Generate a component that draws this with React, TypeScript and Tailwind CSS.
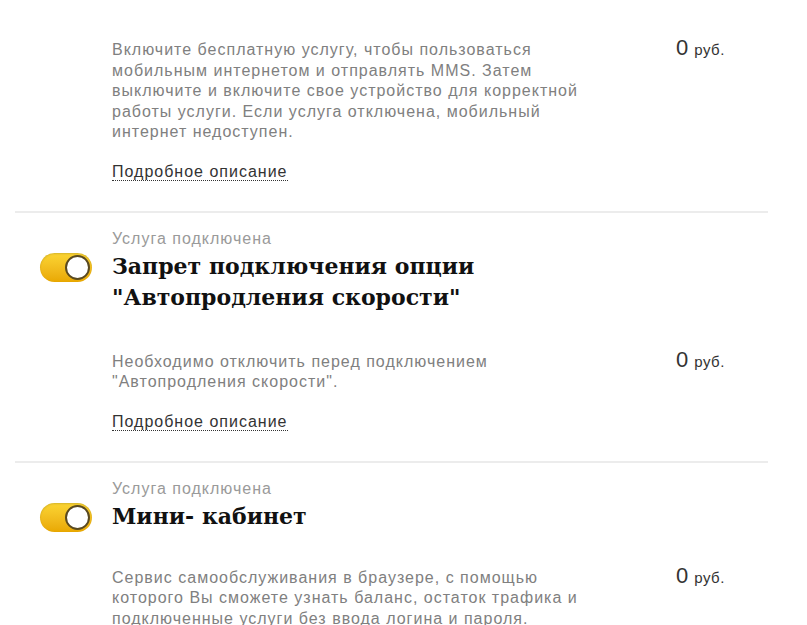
const sans = { fontFamily: '"Liberation Sans", Arial, sans-serif' };

function Toggle() {
  return (
    <div className="relative w-[52px] h-[29px] rounded-full bg-gradient-to-b from-[#fbd532] to-[#e9a800] shadow-[inset_0_1px_2px_rgba(0,0,0,0.15)]">
      <div className="absolute right-[2px] top-[2px] w-[25px] h-[25px] rounded-full bg-white border-2 border-[#5a4a20]" />
    </div>
  );
}

function Price() {
  return (
    <div className="flex items-baseline gap-[6px] text-[#333]" style={sans}>
      <span className="text-[22px] leading-[20px]">0</span>
      <span className="text-[15px] tracking-[0.5px]">руб.</span>
    </div>
  );
}

function Link() {
  return (
    <div className="mt-[16px]">
      <span className="text-[16px] leading-[20px] tracking-[1px] text-[#333] border-b border-dotted border-[#333]" style={sans}>
        Подробное описание
      </span>
    </div>
  );
}

type Item = { title?: string[]; desc: string[]; link?: boolean; gap?: string };

function Section({ item, first, last }: { item: Item; first?: boolean; last?: boolean }) {
  return (
    <div className={`ml-[15px] mr-[39px] ${last ? '' : 'border-b-2 border-[#ececec]'} ${first ? 'pt-[40px] pb-[28px]' : 'pt-[17px] pb-[28px]'}`}>
      {item.title && (
        <>
          <div className="pl-[97px] text-[16px] leading-[18px] tracking-[1px] text-[#9a9a9a]" style={sans}>Услуга подключена</div>
          <div className="flex mt-[3px]">
            <div className="w-[97px] shrink-0 pl-[25px] pt-[2px]">
              <Toggle />
            </div>
            <div className="text-[22px] leading-[31px] font-bold text-[#111]" style={{ fontFamily: '"DejaVu Serif", serif' }}>
              {item.title.map((t) => (
                <div key={t}>{t}</div>
              ))}
            </div>
          </div>
        </>
      )}
      <div className={`flex pl-[97px] ${item.gap ?? ''}`}>
        <div className="w-[564px] shrink-0 text-[16px] leading-[20.5px] tracking-[1px] text-[#808080]" style={sans}>
          {item.desc.map((d) => (
            <div key={d}>{d}</div>
          ))}
        </div>
        <div className="-mt-[2px]">
          <Price />
        </div>
      </div>
      {item.link && <div className="pl-[97px]"><Link /></div>}
    </div>
  );
}

const items: Item[] = [
  {
    desc: [
      'Включите бесплатную услугу, чтобы пользоваться',
      'мобильным интернетом и отправлять MMS. Затем',
      'выключите и включите свое устройство для корректной',
      'работы услуги. Если услуга отключена, мобильный',
      'интернет недоступен.',
    ],
    link: true,
  },
  {
    title: ['Запрет подключения опции', '"Автопродления скорости"'],
    desc: ['Необходимо отключить перед подключением', '"Автопродления скорости".'],
    link: true,
    gap: 'mt-[39px]',
  },
  {
    title: ['Мини- кабинет'],
    desc: [
      'Сервис самообслуживания в браузере, с помощью',
      'которого Вы сможете узнать баланс, остаток трафика и',
      'подключенные услуги без ввода логина и пароля.',
    ],
    gap: 'mt-[36px]',
  },
];

export default function App() {
  return (
    <div className="w-[807px] h-[625px] overflow-hidden bg-white">
      {items.map((it, i) => (
        <Section key={i} item={it} first={i === 0} last={i === items.length - 1} />
      ))}
    </div>
  );
}
